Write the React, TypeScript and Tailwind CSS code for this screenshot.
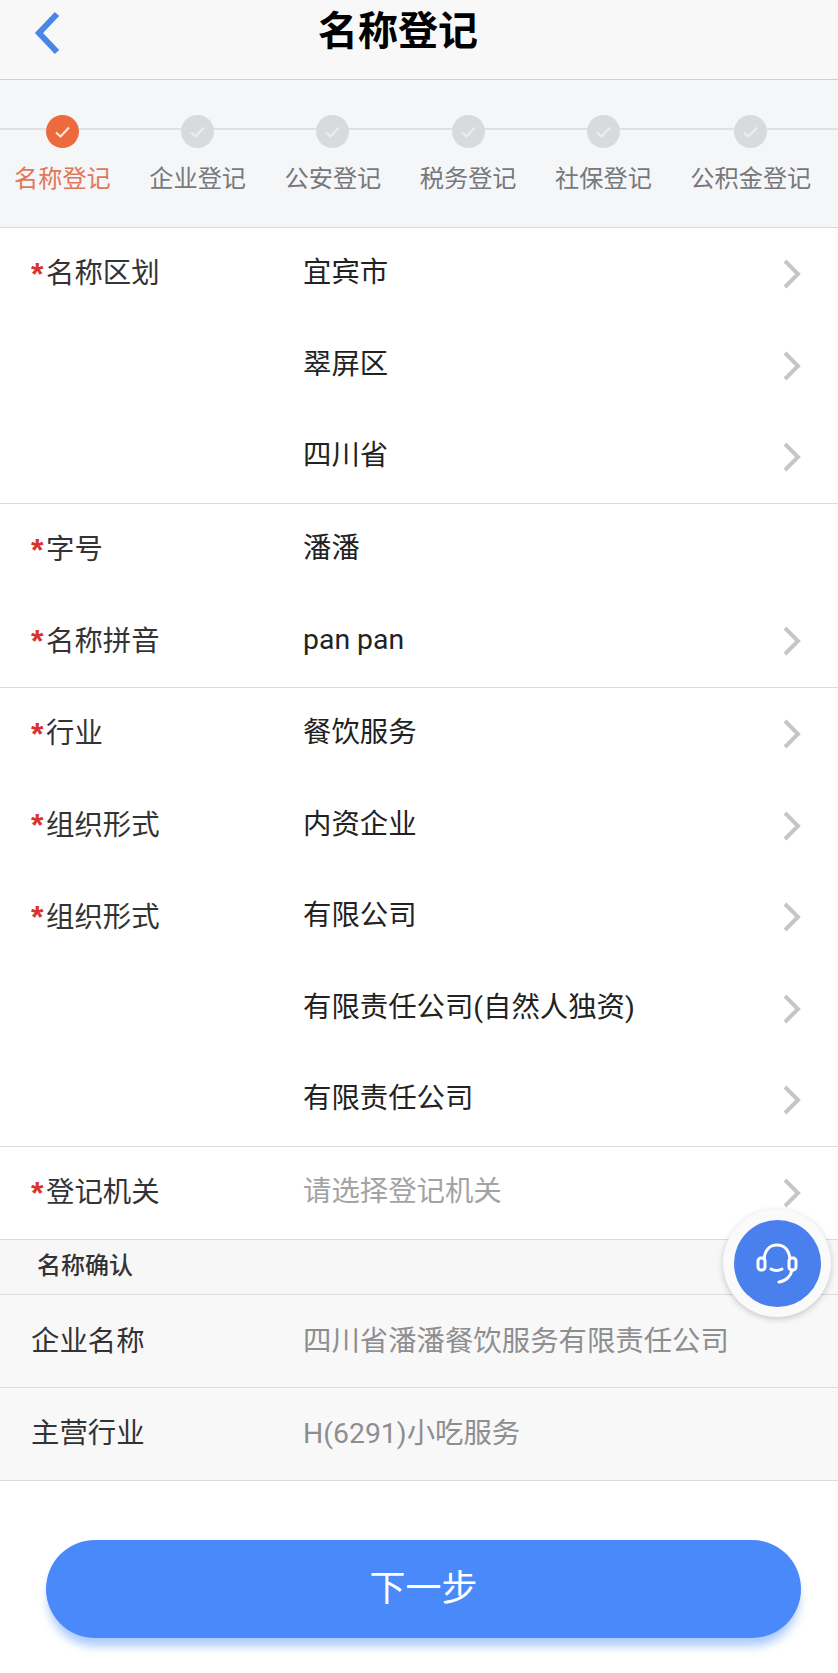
import React from 'react';

const steps = ['名称登记', '企业登记', '公安登记', '税务登记', '社保登记', '公积金登记'];

type Row = { label?: string; value: string; arrow?: boolean; muted?: boolean };

const sections: Row[][] = [
  [
    { label: '名称区划', value: '宜宾市', arrow: true },
    { value: '翠屏区', arrow: true },
    { value: '四川省', arrow: true },
  ],
  [
    { label: '字号', value: '潘潘' },
    { label: '名称拼音', value: 'pan pan', arrow: true },
  ],
  [
    { label: '行业', value: '餐饮服务', arrow: true },
    { label: '组织形式', value: '内资企业', arrow: true },
    { label: '组织形式', value: '有限公司', arrow: true },
    { value: '有限责任公司(自然人独资)', arrow: true },
    { value: '有限责任公司', arrow: true },
  ],
  [{ label: '登记机关', value: '请选择登记机关', arrow: true, muted: true }],
];

const Chevron = () => (
  <svg width="20" height="32" viewBox="0 0 20 32" fill="none" className="absolute right-[36px] top-[30px]">
    <path d="M3 3 L16 16 L3 29" stroke="#c6c6c8" strokeWidth="4" />
  </svg>
);

const Check = ({ color }: { color: string }) => (
  <svg width="17" height="14" viewBox="0 0 17 14" fill="none">
    <path d="M2 7.5 L6.5 11.5 L15 2.5" stroke={color} strokeWidth="2" />
  </svg>
);

const App: React.FC = () => {
  return (
    <div className="relative h-[1673px] w-[838px] overflow-hidden bg-white font-['Roboto','Noto_Sans_CJK_SC',sans-serif]">
      <header className="relative flex h-[80px] items-center justify-center border-b border-[#cfcfd1] bg-[#f8f8f9] pb-[16px] pr-[42px]">
        <svg width="28" height="44" viewBox="0 0 28 44" fill="none" className="absolute left-[33px] top-[11px]">
          <path d="M24 3 L6 22 L24 41" stroke="#4a86e8" strokeWidth="6" />
        </svg>
        <h1 className="text-[40px] font-bold leading-none text-black">名称登记</h1>
      </header>

      <div className="relative flex h-[148px] gap-[38.5px] border-b border-[#d9d9db] bg-[#f5f6f8] px-[14px] pt-[35px]">
        <div className="absolute inset-x-0 top-[48px] h-[2px] bg-[#e0e1e4]" />
        {steps.map((step, index) => (
          <div key={step} className="relative flex shrink-0 flex-col items-center">
            <div
              className={`flex h-[33px] w-[33px] items-center justify-center rounded-full ${
                index === 0 ? 'bg-[#ec6a3d]' : 'bg-[#d9dadd]'
              }`}
            >
              <Check color={index === 0 ? '#ffe9df' : '#eceded'} />
            </div>
            <span
              className={`mt-[15px] whitespace-nowrap text-[24.2px] leading-[32px] ${
                index === 0 ? 'text-[#e0775a]' : 'text-[#77787b]'
              }`}
            >
              {step}
            </span>
          </div>
        ))}
      </div>

      {sections.map((rows, sectionIndex) => (
        <section key={sectionIndex} className="border-b border-[#dcdcde]">
          {rows.map((row) => (
            <div key={row.value} className="relative flex h-[91.6px] items-center">
              <div className="mt-[2px] flex w-[303px] shrink-0 items-center pl-[31px] text-[28.4px] text-[#333333]">
                {row.label && (
                  <>
                    <span className="-mt-[2px] w-[15px] font-['Liberation_Sans',sans-serif] text-[32px] font-bold leading-none text-[#d9332c]">
                      *
                    </span>
                    <span>{row.label}</span>
                  </>
                )}
              </div>
              <span
                className={`-mt-[1px] text-[28.4px] ${row.muted ? 'text-[#a3a3a5]' : 'text-[#222222]'}`}
              >
                {row.value}
              </span>
              {row.arrow && <Chevron />}
            </div>
          ))}
        </section>
      ))}

      <div className="flex h-[55px] items-center border-b border-[#dcdcde] bg-[#f7f7f8] pb-[2px] pl-[37px] text-[24px] font-medium text-[#333333]">
        名称确认
      </div>
      <div className="flex h-[93px] items-center border-b border-[#dcdcde] bg-[#f8f8f9] pt-[3px] text-[28.4px]">
        <span className="w-[303px] shrink-0 pl-[31px] text-[#333333]">企业名称</span>
        <span className="text-[#8e8e90]">四川省潘潘餐饮服务有限责任公司</span>
      </div>
      <div className="flex h-[93px] items-center border-b border-[#dcdcde] bg-[#f8f8f9] pt-[1px] text-[28.4px]">
        <span className="w-[303px] shrink-0 pl-[31px] text-[#333333]">主营行业</span>
        <span className="text-[#8e8e90]">H(6291)小吃服务</span>
      </div>

      <div className="px-[46px] pt-[59px]">
        <button className="flex h-[98px] w-[755px] items-center justify-center rounded-[49px] bg-[#4a89fa] text-[36px] text-white shadow-[0_10px_10px_-2px_rgba(74,137,250,0.45)]">
          下一步
        </button>
      </div>

      <div className="absolute left-[723px] top-[1209px] flex h-[108px] w-[108px] items-center justify-center rounded-full bg-[#fafafa] shadow-[0_2px_6px_rgba(0,0,0,0.2)]">
        <div className="flex h-[87px] w-[87px] items-center justify-center rounded-full bg-[#4a80ee]">
          <svg width="42" height="42" viewBox="0 0 42 42" fill="none">
            <path d="M8 17 C9 8 14 3 21 3 C28 3 33 8 34 17" stroke="white" strokeWidth="3" />
            <rect x="2" y="16" width="7" height="12" rx="3" stroke="white" strokeWidth="3" />
            <rect x="33" y="16" width="7" height="12" rx="3" stroke="white" strokeWidth="3" />
            <path d="M15 27 C18 29 23 29 26 27" stroke="white" strokeWidth="3" strokeLinecap="round" />
            <path d="M36 28 C35 34 30 39 23 40" stroke="white" strokeWidth="3" strokeLinecap="round" />
          </svg>
        </div>
      </div>
    </div>
  );
};

export default App;
